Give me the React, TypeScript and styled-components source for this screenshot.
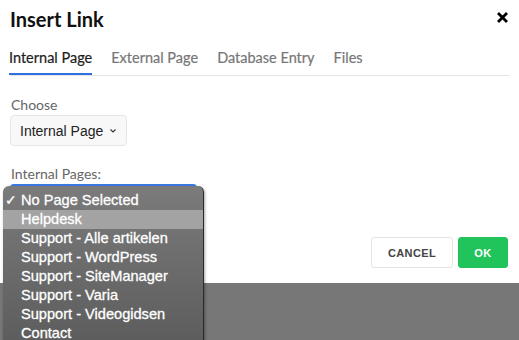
import React from "react";
import styled, { createGlobalStyle } from "styled-components";

const Global = createGlobalStyle`
  html, body { margin: 0; padding: 0; background: #fff; }
  body { overflow: hidden; }
  * { box-sizing: border-box; }
`;

const Page = styled.div`
  position: relative;
  width: 519px;
  height: 340px;
  overflow: hidden;
  display: flex;
  flex-direction: column;
  font-family: Lato, "Noto Sans", sans-serif;
`;

const Modal = styled.div`
  background: #fff;
  height: 283px;
  padding: 7px 9px 0 10px;
  display: flex;
  flex-direction: column;
`;

const Backdrop = styled.div`
  flex: 1;
  background: #777777;
`;

const Header = styled.div`
  display: flex;
  justify-content: space-between;
  align-items: flex-start;
`;

const Title = styled.h1`
  margin: 0;
  font-size: 20px;
  line-height: 24px;
  font-weight: 700;
  color: #111;
`;

const Close = styled.button`
  border: 0;
  background: none;
  padding: 0;
  margin: 5px 2px 0 0;
  width: 11px;
  height: 11px;
  display: flex;
  cursor: pointer;
`;

const Tabs = styled.div`
  display: flex;
  gap: 19px;
  margin-top: 17px;
  border-bottom: 1px solid #e6e6e6;
`;

const Tab = styled.div<{ $active?: boolean }>`
  font-size: 14.5px;
  line-height: 20px;
  padding-bottom: 5px;
  color: ${(p) => (p.$active ? "#1d1d1d" : "#777")};
  -webkit-text-stroke: 0.2px ${(p) => (p.$active ? "#1d1d1d" : "#777")};
  border-bottom: 2px solid ${(p) => (p.$active ? "#2f6fe0" : "transparent")};
  margin-left: ${(p) => (p.$active ? "-1px" : "0")};
`;

const Label = styled.div<{ $top: number }>`
  margin-top: ${(p) => p.$top}px;
  margin-left: 1px;
  font-size: 14px;
  line-height: 17px;
  color: #666;
`;

const SelectButton = styled.div`
  margin-top: 2px;
  align-self: flex-start;
  height: 31px;
  width: 117px;
  padding: 0 9px;
  display: flex;
  align-items: center;
  gap: 7px;
  background: #f8f8f8;
  border: 1px solid #e6e6e6;
  border-radius: 4px;
  font-family: "Liberation Sans", Arial, sans-serif;
  font-size: 14px;
  color: #222;
`;

const PagesSelect = styled.div`
  margin-top: 2px;
  width: 187px;
  height: 31px;
  border: 2px solid #3b7be6;
  border-radius: 4px;
  background: #fff;
`;

const Footer = styled.div`
  margin-top: 22px;
  display: flex;
  justify-content: flex-end;
  gap: 5px;
  padding-right: 2px;
`;

const Button = styled.button<{ $primary?: boolean }>`
  height: 31px;
  padding: 0;
  width: ${(p) => (p.$primary ? "50px" : "82px")};
  border-radius: 3px;
  border: 1px solid ${(p) => (p.$primary ? "#21c45b" : "#e3e3e3")};
  background: ${(p) => (p.$primary ? "#21c45b" : "#fff")};
  color: ${(p) => (p.$primary ? "#fff" : "#444")};
  font-family: "Liberation Sans", Arial, sans-serif;
  font-weight: 700;
  font-size: 11px;
  letter-spacing: 0.4px;
  cursor: pointer;
`;

const Menu = styled.div`
  position: absolute;
  left: 3px;
  top: 186px;
  width: 201px;
  height: 170px;
  padding-top: 5px;
  border-radius: 6px;
  background: linear-gradient(#7b7b7b, #5a5a5a);
  border-right: 1px solid #2a2a2a;
  box-shadow: 1px 1px 3px rgba(0, 0, 0, 0.35);
  font-family: "Liberation Sans", Arial, sans-serif;
`;

const Item = styled.div<{ $hover?: boolean }>`
  position: relative;
  height: 19px;
  line-height: 19px;
  padding-left: 18px;
  font-size: 14.6px;
  color: #fff;
  -webkit-text-stroke: 0.3px #fff;
  background: ${(p) => (p.$hover ? "#a3a3a3" : "transparent")};
  white-space: nowrap;
`;

const Check = styled.span`
  position: absolute;
  left: 2px;
  top: 0;
  font-size: 14px;
`;

const items = [
  "No Page Selected",
  "Helpdesk",
  "Support - Alle artikelen",
  "Support - WordPress",
  "Support - SiteManager",
  "Support - Varia",
  "Support - Videogidsen",
  "Contact",
];

export default function App() {
  return (
    <>
      <Global />
      <Page>
        <Modal>
          <Header>
            <Title>Insert Link</Title>
            <Close aria-label="Close">
              <svg width="11" height="11" viewBox="0 0 11 11">
                <path d="M2 2 L9 9 M9 2 L2 9" stroke="#000" strokeWidth="2.8" strokeLinecap="square" />
              </svg>
            </Close>
          </Header>
          <Tabs>
            <Tab $active>Internal Page</Tab>
            <Tab>External Page</Tab>
            <Tab>Database Entry</Tab>
            <Tab>Files</Tab>
          </Tabs>
          <Label $top={20}>Choose</Label>
          <SelectButton>
            Internal Page
            <svg width="6" height="4" viewBox="0 0 6 4">
              <path d="M0.5 0.5 L3 3 L5.5 0.5" fill="none" stroke="#333" strokeWidth="1.1" />
            </svg>
          </SelectButton>
          <Label $top={19}>Internal Pages:</Label>
          <PagesSelect />
          <Footer>
            <Button>CANCEL</Button>
            <Button $primary>OK</Button>
          </Footer>
        </Modal>
        <Backdrop />
        <Menu>
          {items.map((t, i) => (
            <Item key={t} $hover={i === 1}>
              {i === 0 && <Check>✓</Check>}
              {t}
            </Item>
          ))}
        </Menu>
      </Page>
    </>
  );
}
